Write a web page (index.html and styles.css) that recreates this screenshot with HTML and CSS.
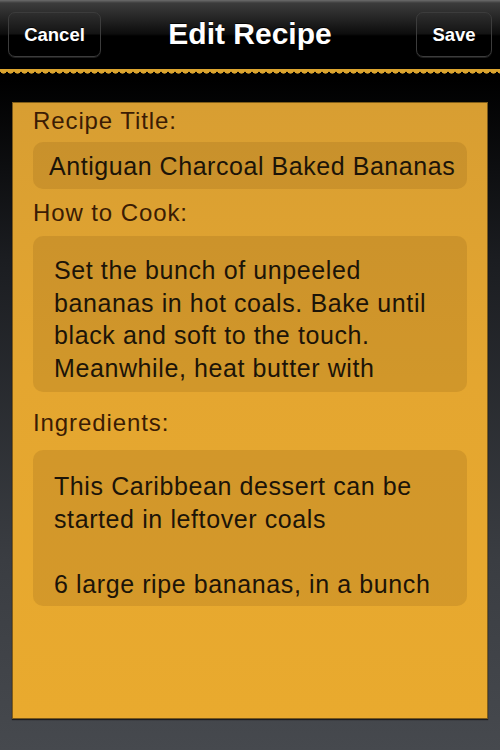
FILE: index.html
```html
<!DOCTYPE html>
<html>
<head>
<meta charset="utf-8">
<link rel="stylesheet" href="styles.css">
</head>
<body>
<div class="screen">
  <header class="navbar">
    <button class="nav-btn btn-cancel">Cancel</button>
    <h1 class="nav-title">Edit Recipe</h1>
    <button class="nav-btn btn-save">Save</button>
  </header>
  <div class="zigzag"></div>
  <main class="content">
    <section class="card">
      <label class="field-label label-title">Recipe Title:</label>
      <div class="text-field">Antiguan Charcoal Baked Bananas</div>
      <label class="field-label label-cook">How to Cook:</label>
      <div class="text-area">
        <div class="text-scroll scroll-cook">Set the bunch of unpeeled<br>bananas in hot coals. Bake until<br>black and soft to the touch.<br>Meanwhile, heat butter with</div>
      </div>
      <label class="field-label label-ingr">Ingredients:</label>
      <div class="text-area">
        <div class="text-scroll scroll-ingr">This Caribbean dessert can be<br>started in leftover coals<br><br>6 large ripe bananas, in a bunch</div>
      </div>
    </section>
  </main>
</div>
</body>
</html>
```

FILE: styles.css
```css
* { box-sizing: border-box; }
html, body {
  margin: 0;
  padding: 0;
  width: 500px;
  height: 750px;
  overflow: hidden;
}
body {
  font-family: "Liberation Sans", Arial, sans-serif;
  background: linear-gradient(to bottom, #000 0px, #000 80px, #1b1d21 260px, #3a3d42 560px, #46494e 750px);
}
.screen {
  display: flex;
  flex-direction: column;
  height: 750px;
}
.navbar {
  height: 69px;
  display: grid;
  grid-template-columns: 1fr auto 1fr;
  align-items: start;
  padding: 12px 8px 0 8px;
  background: linear-gradient(to bottom, #6c6c6c 0px, #3c3c3c 3px, #222 20px, #0c0c0c 34px, #000 36px, #000 69px);
}
.nav-btn {
  height: 45px;
  padding: 0;
  border: 1px solid #3c3c3c;
  border-radius: 7px;
  background: linear-gradient(to bottom, #2e2e2e 0%, #141414 48%, #000 52%, #000 100%);
  box-shadow: 0 1px 0 rgba(255,255,255,0.12);
  color: #fff;
  font-family: "Liberation Sans", Arial, sans-serif;
  font-weight: bold;
  font-size: 18.5px;
  line-height: 43px;
  text-shadow: 0 -1px 0 rgba(0,0,0,0.8);
}
.btn-cancel { width: 93px; justify-self: start; }
.btn-save { width: 76px; justify-self: end; }
.nav-title {
  margin: 0;
  color: #fff;
  font-size: 30px;
  font-weight: bold;
  line-height: 44px;
  text-shadow: 0 -1px 0 rgba(0,0,0,0.8);
}
.zigzag {
  height: 7px;
  background:
    linear-gradient(#dba42f, #dba42f) 0 0 / 100% 2px no-repeat,
    radial-gradient(circle at 50% 0, #dba42f 3.3px, rgba(219,164,47,0) 3.9px) 0 1px / 7px 6px repeat-x;
}
.content {
  padding: 26px 12px 0 12px;
}
.card {
  height: 617px;
  padding: 5px 20px 0 20px;
  display: flex;
  flex-direction: column;
  background: linear-gradient(to bottom, #d89e32 0%, #e4a630 45%, #e9aa2e 100%);
  border: 1px solid rgba(40,30,10,0.55);
  box-shadow: 0 1px 1px rgba(0,0,0,0.6);
}
.field-label {
  display: block;
  color: #3b1c04;
  font-size: 24px;
  letter-spacing: 0.9px;
  line-height: 26px;
}
.label-title { margin-bottom: 8px; }
.label-cook { margin-top: 11px; margin-bottom: 10px; }
.label-ingr { margin-top: 18px; margin-bottom: 14px; }
.text-field {
  height: 47px;
  padding: 1px 0 0 16px;
  border-radius: 10px;
  background: rgba(120, 80, 20, 0.17);
  color: #1c1408;
  font-size: 25px;
  letter-spacing: 0.55px;
  line-height: 47px;
  white-space: nowrap;
  overflow: hidden;
}
.text-area {
  height: 156px;
  padding: 7px 21px;
  border-radius: 10px;
  background: rgba(120, 80, 20, 0.17);
}
.text-scroll {
  height: 142px;
  overflow: hidden;
  color: #1c1408;
  font-size: 25px;
  letter-spacing: 0.6px;
  line-height: 32.7px;
  white-space: nowrap;
}
.scroll-cook { padding-top: 11px; }
.scroll-ingr { padding-top: 13px; }
```
